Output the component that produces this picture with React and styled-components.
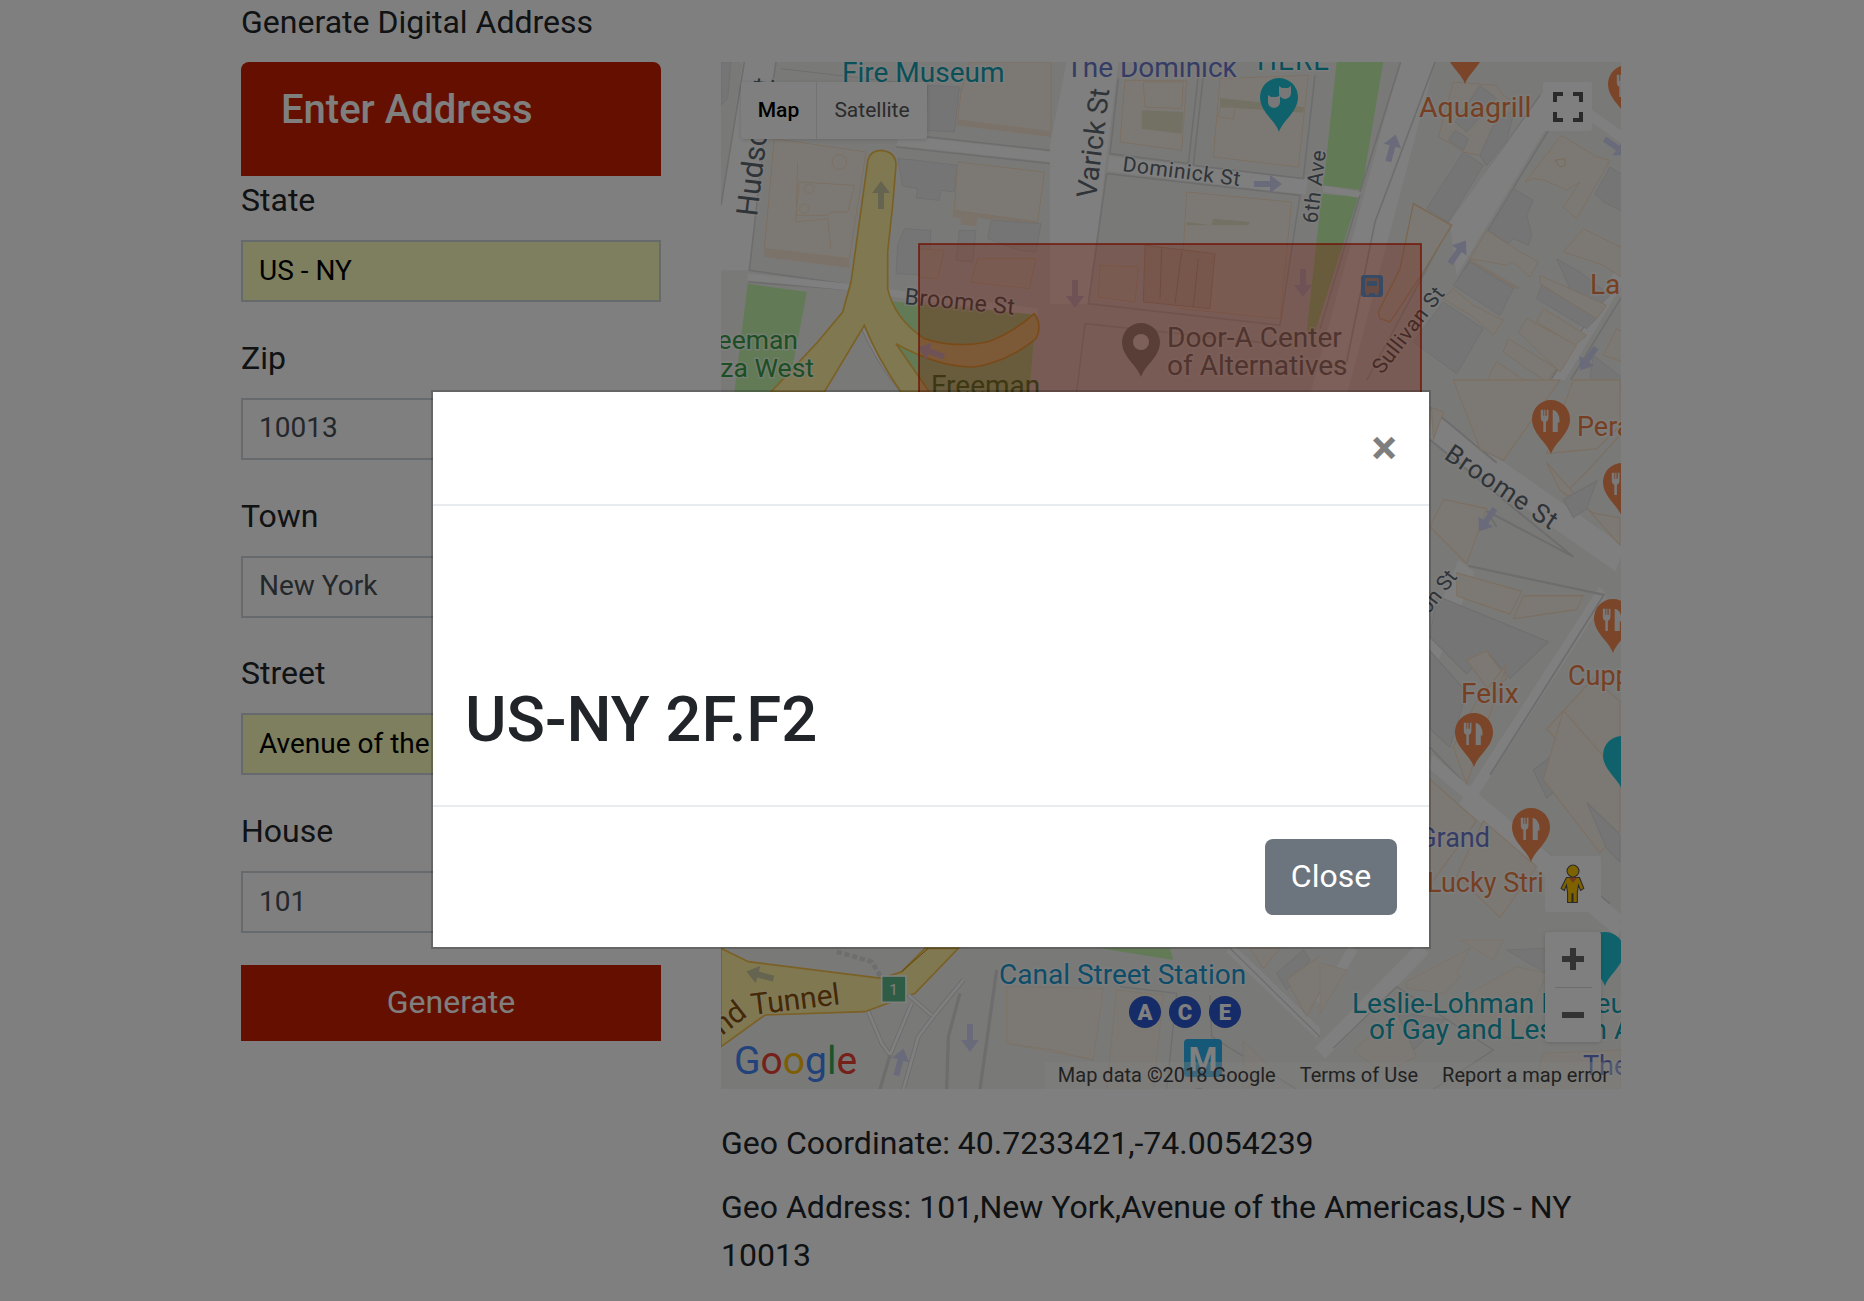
import React from 'react';
import styled, { createGlobalStyle } from 'styled-components';

const GlobalStyle = createGlobalStyle`
  html, body { margin: 0; padding: 0; height: 100%; overflow: hidden; background: #fff; }
  body { font-family: Roboto, "Liberation Sans", sans-serif; font-size: 32px; line-height: 1.5; color: #212529; }
  * { box-sizing: border-box; }
`;

const Page = styled.div`
  display: grid;
  grid-template-columns: 420px 900px;
  column-gap: 60px;
  padding-left: 241px;
  margin-top: -2px;
`;

const Title = styled.div`
  grid-column: 1 / 3;
  margin-bottom: 16px;
`;

const FormCol = styled.div`
  display: flex;
  flex-direction: column;
`;

const FormHeader = styled.div`
  height: 114px;
  padding: 24px 40px;
  background: #c81e00;
  color: #fff;
  border-radius: 8px 8px 0 0;
  font-size: 40px;
  font-weight: 500;
  line-height: 48px;
`;

const Group = styled.div`
  display: flex;
  flex-direction: column;
  margin-bottom: 31.75px;
`;

const FieldLabel = styled.label`
  margin-bottom: 16px;
`;

const Field = styled.input`
  height: 62px;
  width: 100%;
  padding: 0 16px 2px;
  border: 2px solid #ced4da;
  outline: none;
  font-family: inherit;
  font-size: 28px;
  color: ${({ $filled }) => ($filled ? '#000' : '#495057')};
  background: ${({ $filled }) => ($filled ? '#faffbd' : '#fff')};
`;

const Generate = styled.button`
  height: 76px;
  padding: 0 0 2px;
  border: 0;
  background: #c81e00;
  color: #fff;
  font-family: inherit;
  font-size: 32px;
`;

const MapCol = styled.div`
  display: flex;
  flex-direction: column;
`;

const MapBox = styled.div`
  position: relative;
  width: 900px;
  height: 1027px;
  overflow: hidden;
  background: #f3f3f1;
  margin-bottom: 30px;
`;

const MapSvg = styled.svg`
  display: block;
  width: 900px;
  height: 1027px;
`;

const GeoLine = styled.p`
  margin: 0 0 16px;
`;

const TypeControl = styled.div`
  position: absolute;
  left: 20px;
  top: 20px;
  display: flex;
  height: 57px;
  background: #fff;
  border-radius: 3px;
  box-shadow: 0 1px 4px rgba(0, 0, 0, 0.15);
  font-size: 21px;
`;

const TypeTab = styled.div`
  display: flex;
  align-items: center;
  justify-content: center;
  width: ${({ $w }) => $w}px;
  color: ${({ $active }) => ($active ? '#000' : '#565656')};
  font-weight: ${({ $active }) => ($active ? 500 : 400)};
  border-right: ${({ $active }) => ($active ? '1px solid #e6e6e6' : '0')};
`;

const MapButton = styled.div`
  position: absolute;
  display: flex;
  align-items: center;
  justify-content: center;
  left: ${({ $x }) => $x}px;
  top: ${({ $y }) => $y}px;
  width: ${({ $w }) => $w}px;
  height: ${({ $h }) => $h}px;
  background: #fff;
  border-radius: 3px;
`;

const ZoomBox = styled.div`
  position: absolute;
  left: 824px;
  top: 870px;
  width: 56px;
  height: 110px;
  background: #fff;
  border-radius: 3px;
  box-shadow: 0 1px 4px rgba(0, 0, 0, 0.15);
  display: flex;
  flex-direction: column;
  align-items: center;
`;

const ZoomPart = styled.div`
  flex: 1;
  display: flex;
  align-items: center;
  justify-content: center;
`;

const ZoomRule = styled.div`
  width: 37px;
  height: 1px;
  background: #d8d8d8;
`;

const Attribution = styled.div`
  position: absolute;
  right: 0;
  bottom: 0;
  height: 27px;
  width: 576px;
  display: flex;
  align-items: center;
  justify-content: flex-end;
  gap: 24px;
  padding-right: 12px;
  background: rgba(255, 255, 255, 0.4);
  color: #444;
  font-size: 20px;
  line-height: 27px;
  white-space: nowrap;
`;

const Backdrop = styled.div`
  position: fixed;
  inset: 0;
  background: rgba(0, 0, 0, 0.5);
  display: flex;
  justify-content: center;
  align-items: flex-start;
  padding: 390px 2px 0 0;
`;

const Modal = styled.div`
  width: 1000px;
  height: 559px;
  background: #fff;
  background-clip: padding-box;
  border: 2px solid rgba(0, 0, 0, 0.2);
  display: flex;
  flex-direction: column;
`;

const ModalHeader = styled.div`
  display: flex;
  justify-content: flex-end;
  height: 114px;
  padding: 32px;
  border-bottom: 2px solid #e9ecef;
`;

const CloseX = styled.span`
  font-size: 48px;
  font-weight: 700;
  line-height: 48px;
  color: #000;
  opacity: 0.5;
`;

const ModalBody = styled.div`
  flex: 1;
  display: flex;
  align-items: flex-end;
  padding: 32px;
`;

const Code = styled.h2`
  margin: 0 0 15px;
  font-size: 63.5px;
  font-weight: 500;
  line-height: 1.2;
`;

const ModalFooter = styled.div`
  display: flex;
  justify-content: flex-end;
  padding: 32px;
  border-top: 2px solid #e9ecef;
`;

const CloseButton = styled.button`
  width: 132px;
  height: 76px;
  padding: 0 0 2px;
  border: 0;
  border-radius: 8px;
  background: #6c757d;
  color: #fff;
  font-family: inherit;
  font-size: 32px;
`;

// map drawing parts
const Label = styled.text`
  font-family: Roboto, "Liberation Sans", sans-serif;
  font-size: ${({ $s }) => $s || 28}px;
  fill: ${({ $c }) => $c};
  stroke: ${({ $halo }) => $halo || 'rgba(255,255,255,.6)'};
  stroke-width: 3px;
  paint-order: stroke;
`;

const Beige = styled.polygon`
  fill: #f8f3ea;
  stroke: #f8dfc4;
  stroke-width: ${({ $sw }) => $sw || 3}px;
`;

const Shade = styled.polygon`
  fill: #f7e4d2;
`;

const Gray = styled.polygon`
  fill: #ebebeb;
  stroke: #dfdfdf;
  stroke-width: 3px;
`;

const RoadEdge = styled.polyline`
  fill: none;
  stroke: #dbdbdb;
  stroke-width: ${({ $sw }) => $sw || 5}px;
`;

const RoadFill = styled.polyline`
  fill: none;
  stroke: #fff;
  stroke-width: ${({ $sw }) => $sw || 20}px;
`;

const TEAL = '#12a0b2';
const INDIGO = '#6a78cc';
const ORANGE = '#ee7f45';
const PIN_ORANGE = '#f58a50';
const PIN_TEAL = '#1fc4d8';
const ROADTEXT = '#5f6870';
const ARROW = '#d4d7f5';

const PIN_PATH = 'M0 34 C-4 22 -19 14 -19 -1 A19 19 0 1 1 19 -1 C19 14 4 22 0 34Z';

const Pin = ({ x, y, color = PIN_ORANGE, children }) => (
  <g transform={`translate(${x} ${y})`}>
    <path d={PIN_PATH} fill={color} />
    {children}
  </g>
);

const Fork = () => (
  <g fill="#f3f3f3" transform="scale(.85)">
    <path d="M-12 -12v9q0 4 3 5v12h3V2q3-1 3-5v-9h-2v7h-1.5v-7h-1.5v7H-9v-7z" />
    <path d="M2 -12q8 2 8 13v2H8v11H2z" />
  </g>
);

const Mask = ({ x, y }) => (
  <path
    transform={`translate(${x} ${y})`}
    d="M-6 -6 L-3 -4 H3 L6 -6 V1 Q6 6 0 7 Q-6 6 -6 1Z"
    fill="#f0f0f0"
  />
);

const Arrow = ({ x, y, r = 0, color = ARROW }) => (
  <path
    transform={`translate(${x} ${y}) rotate(${r})`}
    d="M-3 14 L-3 -2 L-9 -2 L0 -14 L9 -2 L3 -2 L3 14 Z"
    fill={color}
  />
);

const Subway = ({ x, letter }) => (
  <g>
    <circle cx={x} cy="950" r="16" fill="#2a58d0" />
    <text x={x} y="958" textAnchor="middle" fontFamily="Roboto, sans-serif" fontWeight="900" fontSize="22" fill="#fff">
      {letter}
    </text>
  </g>
);

const MapDrawing = () => (
  <MapSvg viewBox="0 0 900 1027">
    <rect width="900" height="1027" fill="#f3f3f1" />

    {/* top left */}
    <g transform="scale(.33333)">
      <polygon points="65,0 165,0 85,625 0,625 0,430" fill="#fff" />
      <RoadEdge points="70,0 0,430" />
      <RoadEdge points="165,0 130,230 85,625 388,668" />
      <RoadEdge points="80,660 380,682" />
      <RoadFill $sw={20} points="80,645 385,675" />
      <RoadEdge points="525,255 990,305" />
      <RoadEdge points="180,20 990,115" $sw={3} />
      <RoadFill $sw={30} points="530,235 990,285" />
      <RoadEdge points="530,215 990,265" />
      <Gray points="0,0 30,0 20,110 0,130" />
      <Gray points="620,70 715,75 700,210 615,205" />
      <Beige points="745,0 990,0 990,210 710,175 720,90" />
      <Shade points="708,172 990,208 990,225 706,190" />
      <Beige points="160,230 435,270 385,590 130,560" />
      <Shade points="130,560 385,590 385,618 130,585" />
      <polyline points="230,300 225,480 320,470 330,560" fill="none" stroke="#f8dfc4" strokeWidth="3" />
      <polygon points="235,360 400,370 380,450 330,450 320,460 225,460" fill="none" stroke="#f8dfc4" strokeWidth="3" />
      <circle cx="355" cy="300" r="22" fill="none" stroke="#f8dfc4" strokeWidth="3" />
      <circle cx="265" cy="380" r="14" fill="none" stroke="#f8dfc4" strokeWidth="3" />
      <circle cx="250" cy="440" r="14" fill="none" stroke="#f8dfc4" strokeWidth="3" />
      <Gray points="530,290 590,295 670,305 710,310 700,390 660,385 655,415 585,408 590,380 545,372" />
      <Beige points="710,300 970,330 950,480 700,445" />
      <Shade points="695,445 950,482 950,490 770,468 765,492 720,488 718,468 695,465" />
      <Gray points="550,500 630,505 620,640 525,635 530,550" />
      <Gray points="715,505 765,505 755,600 705,595" />
      <Gray points="810,475 960,485 945,570 895,565 800,530" />
      <Beige points="595,560 670,565 650,650 595,645" />
      <Beige points="770,590 945,590 925,680 750,660" />
      <RoadFill $sw={20} points="470,688 590,703 950,750" />
      <polygon points="80,665 258,690 200,990 40,990" fill="#c6f5ae" />
      <polygon points="510,718 945,758 925,990 630,990 520,850" fill="#c6f5ae" />
      <path d="M425 795 Q470 900 545 990" fill="none" stroke="#dcdcdc" strokeWidth="14" />
      <path d="M425 795 Q470 900 545 990" fill="none" stroke="#fff" strokeWidth="8" />
      <path
        d="M440 300 Q445 265 482 265 Q525 270 525 310 L515 430 L500 570 L500 680 Q520 770 610 830 Q700 860 800 840 Q880 810 940 755 Q965 790 945 830 Q860 900 760 915 Q650 915 525 845 L625 990 L540 990 Q470 890 430 790 L310 990 L150 990 L290 840 L365 750 L390 660 Z"
        fill="#fff0a0"
        stroke="#f5c04a"
        strokeWidth="5"
      />
    </g>

    {/* top middle */}
    <g transform="translate(329 0) scale(.33333)">
      <polygon points="50,0 205,0 115,725 0,725 0,250" fill="#fff" />
      <RoadFill $sw={45} points="175,305 770,375" />
      <RoadEdge points="205,50 180,275 415,305 445,40" />
      <RoadEdge points="430,310 460,40" />
      <RoadEdge points="430,310 760,350 795,40" />
      <RoadEdge points="170,335 750,400 690,790 115,725 170,335" />
      <RoadEdge points="105,785 715,850" />
      <RoadEdge points="105,785 80,990" />
      <Beige points="225,55 410,55 395,265 210,240" />
      <polygon points="275,145 400,150 395,215 275,200" fill="#e6e0c8" />
      <polygon points="280,60 400,60 395,140 285,135" fill="none" stroke="#f8dfc4" strokeWidth="3" />
      <Beige points="510,50 775,40 745,315 490,285" />
      <polygon points="510,108 762,135 760,152 510,135" fill="#e6e0c8" />
      <polygon points="510,135 555,135 550,170 505,165" fill="none" stroke="#f8dfc4" strokeWidth="3" />
      <Beige points="410,390 725,420 690,770 390,740 " />
      <polygon points="410,480 485,490 490,470 600,480 595,490 410,490" fill="#e6e0c8" />
      <Beige points="150,610 265,615 255,720 145,705" />
      <polygon points="285,550 495,575 480,740 280,720" fill="#eee4d8" stroke="#e4cdb8" strokeWidth="3" />
      <polyline points="335,560 330,710" fill="none" stroke="#d8c4b4" strokeWidth="3" />
      <polyline points="395,570 375,725" fill="none" stroke="#d8c4b4" strokeWidth="3" />
      <polyline points="445,590 430,735" fill="none" stroke="#d8c4b4" strokeWidth="3" />
      <polygon points="860,0 1000,0 935,385 820,370" fill="#c6f5ae" />
      <polygon points="815,395 925,405 795,810 770,810" fill="#c6f5ae" />
      <polyline points="820,380 930,398" fill="none" stroke="#fff" strokeWidth="18" />
    </g>

    {/* top right */}
    <g transform="translate(619 0) scale(.33333)">
      <polygon points="180,0 285,0 20,1000 -90,1000" fill="#fff" />
      <RoadEdge points="285,0 105,480 20,900" />
      <RoadEdge points="182,0 60,390" />
      <RoadEdge points="60,400 -60,800" />
      <RoadEdge points="80,955 330,490 600,100" />
      <RoadEdge points="350,660 640,180" />
      <polygon points="330,480 610,90 660,130 350,640" fill="#fff" />
      <polyline points="640,80 850,230" fill="none" stroke="#fff" strokeWidth="30" />
      <polyline points="630,990 840,640" fill="none" stroke="#fff" strokeWidth="40" />
      <RoadEdge points="610,990 820,650" />
      <RoadEdge points="670,990 860,680" />
      <polygon points="220,425 335,490 250,630 150,780 120,770 115,750 180,620" fill="#f8f3ea" stroke="#f5cfa4" strokeWidth="4" />
      <Gray points="370,270 430,310 325,480 260,440" />
      <Beige points="340,60 470,70 490,100 520,120 450,250 440,310 420,280 370,270 325,240 295,225" />
      <Gray points="420,70 470,110 380,210 345,180" />
      <Gray points="460,190 525,140 500,235 440,310 420,280" />
      <Gray points="345,205 385,230 370,265 325,235" />
      <Beige points="665,220 770,285 810,295 750,400 710,470 670,435 720,360 680,385 615,355 580,350 555,360" />
      <polygon points="645,295 675,290 675,310 660,315" fill="none" stroke="#f0d4b0" strokeWidth="3" />
      <Gray points="810,315 850,340 850,450 790,420 765,395" />
      <Gray points="520,380 580,415 560,460 575,520 565,550 520,530 505,545 445,505" />
      <Beige points="440,505 525,560 595,600 570,645 520,600 500,610 390,590" />
      <Shade points="390,590 545,680 520,680 390,605" />
      <Gray points="390,600 520,680 480,760 340,670" />
      <Beige points="340,680 400,730 490,775 460,820 400,765 310,710" />
      <Gray points="310,720 430,800 350,935 220,840" />
      <Beige points="730,500 850,560 850,650 790,610 670,570" />
      <Gray points="650,590 720,630 810,700 780,730 690,680" />
      <Gray points="605,670 770,770 740,800 590,710" />
      <Beige points="600,640 800,730 770,770 600,665" />
      <Beige points="610,740 740,820 705,850 590,780" />
      <Beige points="560,770 710,850 660,930 535,810" />
      <Beige points="505,830 650,920 620,960 490,870" />
      <Beige points="470,900 610,990 440,990 450,935" />
      <Gray points="760,880 850,950 850,990 745,980" />
      <Beige points="830,800 850,810 850,900 790,880" />
    </g>

    {/* right strip */}
    <g transform="translate(679 318) scale(.33333 .45914)">
      <polygon points="90,0 660,0 660,1100 90,1100" fill="#f3f3f1" />
      <polyline points="90,100 660,390" fill="none" stroke="#fff" strokeWidth="60" />
      <RoadEdge points="90,60 290,180" />
      <RoadEdge points="90,130 520,385 260,285 290,320" />
      <polyline points="200,405 90,600" fill="none" stroke="#fff" strokeWidth="55" />
      <polyline points="610,460 200,920 660,1200" fill="none" stroke="#fff" strokeWidth="30" />
      <RoadEdge points="205,405 612,468 270,860" />
      <RoadEdge points="90,800 230,905 630,1140" $sw={4} />
      <polyline points="90,830 660,1180" fill="none" stroke="#fff" strokeWidth="30" />
      <Beige points="160,0 480,0 310,175 240,150" />
      <Beige points="95,60 130,70 100,130" />
      <Beige points="520,0 660,0 660,100 590,150 440,160" />
      <polyline points="490,250 560,200 660,120" fill="none" stroke="#f8dfc4" strokeWidth="3" />
      <Beige points="130,260 260,280 200,400 90,320" />
      <Beige points="480,240 580,290 660,300 660,360 440,180" />
      <Gray points="490,260 590,220 560,280 520,300" />
      <Beige points="170,420 365,460 330,510 170,470" />
      <Beige points="370,470 550,470 530,500 340,520" />
      <Gray points="110,470 445,570 330,650 260,590 200,640 90,560" />
      <Gray points="90,590 200,680 150,800 90,760" />
      <Beige points="200,610 260,590 320,650 270,680" />
      <Beige points="160,800 230,700 320,620 200,880" />
      <Gray points="400,850 470,810 520,860 440,910" />
      <Beige points="440,760 580,650 660,700 660,830 590,880" />
      <Beige points="490,720 660,860 660,980 600,1030 430,870" />
      <Gray points="560,920 660,990 660,1050 620,1020" />
      <Beige points="90,870 230,960 90,1100" />
      <Beige points="250,960 410,1060 300,1170 170,1080" />
    </g>

    {/* bottom */}
    <g transform="translate(-6 878) scale(.33333)">
      <polygon points="0,25 900,25 900,448 0,448" fill="#f3f3f1" />
      <polygon points="18,25 100,65 500,115 560,95 630,25 730,25 600,160 450,215 150,225 18,320" fill="#fff0a0" stroke="#f5c04a" strokeWidth="5" />
      <polyline points="640,25 560,95" fill="none" stroke="#c88a10" strokeWidth="3" />
      <polyline points="365,35 470,65 500,115" fill="none" stroke="#dcdcdc" strokeWidth="14" strokeDasharray="16 8" />
      <RoadEdge $sw={14} points="460,215 500,310 525,345 590,190" />
      <RoadFill $sw={8} points="460,215 500,310 525,345 590,190" />
      <RoadEdge $sw={14} points="580,165 655,230 745,120" />
      <RoadFill $sw={8} points="580,165 655,230 745,120" />
      <RoadEdge $sw={14} points="655,230 610,290 565,448" />
      <RoadFill $sw={8} points="655,230 610,290 565,448" />
      <RoadEdge $sw={10} points="525,345 495,448" />
      <RoadEdge $sw={10} points="735,160 700,290 695,448" />
      <RoadEdge $sw={10} points="845,90 795,448" />
      <rect x="500" y="108" width="73" height="79" fill="#5fb98a" stroke="#fff" strokeWidth="5" />
      <text x="536" y="165" textAnchor="middle" fontFamily="Roboto, sans-serif" fontSize="46" fill="#fff">1</text>
    </g>
    <g transform="translate(289 878) scale(.33333)">
      <polygon points="0,25 700,25 700,448 0,448" fill="#f3f3f1" />
      <polygon points="270,25 480,25 490,60" fill="#c6f5ae" />
      <Beige points="-10,140 280,145 250,360 -10,310" $sw={2} />
      <Beige points="320,150 460,165 430,448 290,448" $sw={2} />
      <polyline points="-10,310 130,330 250,360" fill="none" stroke="#f8dfc4" strokeWidth="2" />
      <polyline points="660,25 930,285" fill="none" stroke="#fff" strokeWidth="30" />
      <RoadEdge points="660,25 930,290 1000,200" $sw={4} />
      <RoadEdge points="330,140 500,160 470,448" $sw={4} />
      <RoadEdge points="600,165 605,290 860,448" $sw={4} />
      <Beige points="700,305 800,400 700,448" $sw={2} />
      <Gray points="800,100 880,30 900,60 830,150" />
      <Beige points="720,25 810,25 760,85" />
      <Beige points="830,120 940,40 960,100 890,230" />
      <ellipse cx="568" cy="470" rx="30" ry="26" fill="#c8c8c8" />
    </g>
    <g transform="translate(599 878) scale(.33333)">
      <polygon points="0,25 903,25 903,448 0,448" fill="#f3f3f1" />
      <polyline points="100,25 0,190" fill="none" stroke="#fff" strokeWidth="30" />
      <polyline points="310,25 0,340" fill="none" stroke="#fff" strokeWidth="45" />
      <RoadEdge points="40,325 230,140 520,330 340,448" $sw={4} />
      <Beige points="0,70 80,90 0,220" $sw={2} />
      <Beige points="260,125 450,25 410,100 420,110 375,160 260,145" $sw={2} />
      <Gray points="230,215 375,240 280,330" />
      <Beige points="100,330 230,220 290,350 190,400" $sw={2} />
      <Beige points="380,200 590,80 680,100 600,300 440,270" $sw={2} />
      <Gray points="560,30 680,25 680,100" />
      <Beige points="420,0 550,0 520,60" $sw={2} />
      <polygon points="670,340 903,330 903,448 640,448" fill="#f8f3ea" stroke="#f8dfc4" strokeWidth="2" />
    </g>

    {/* arrows */}
    <Arrow x={160} y={133} color="#c8c8a0" />
    <Arrow x={547} y={122} r={90} />
    <Arrow x={671} y={86} r={15} />
    <Arrow x={737} y={190} r={35} />
    <Arrow x={867} y={297} r={215} />
    <Arrow x={895} y={85} r={125} />
    <Arrow x={766} y={458} r={215} />
    <Arrow x={39} y={913} r={-75} color="#c8c8a0" />
    <Arrow x={179} y={1000} r={15} />
    <Arrow x={249} y={976} r={180} />
    <Arrow x={354} y={232} r={180} />
    <Arrow x={582} y={221} r={180} />
    <Arrow x={210} y={290} r={-70} />

    {/* labels that sit under the red area */}
    <Label $s={23} $c={ROADTEXT} transform="translate(183 242) rotate(5.5)" letterSpacing=".4">Broome St</Label>
    <Label $c="#4a8c3a" x="210" y="333" $halo="none">Freeman</Label>
    <Pin x={420} y={281} color="#9a9ea2">
      <circle cy="-1" r="8" fill="#fff" />
    </Pin>
    <Label $c="#7c8288" x="446" y="285">Door-A Center</Label>
    <Label $c="#7c8288" x="446" y="313">of Alternatives</Label>
    <Label $s={21} $c={ROADTEXT} transform="translate(661 313) rotate(-52)" letterSpacing=".6">Sullivan St</Label>

    {/* the plotted bounding box */}
    <rect x="198" y="182" width="502" height="170" fill="#f03000" fillOpacity=".3" stroke="#e02000" strokeOpacity=".7" strokeWidth="2" />

    <g transform="translate(640 213)">
      <rect width="22" height="22" rx="3" fill="#6f97c8" />
      <rect x="4" y="3" width="14" height="15" rx="2" fill="#d09888" />
      <rect x="6" y="6" width="10" height="5" fill="#6f97c8" />
      <rect x="5" y="18" width="3" height="2" fill="#d09888" />
      <rect x="14" y="18" width="3" height="2" fill="#d09888" />
    </g>

    {/* labels */}
    <Label $c={TEAL} x="121" y="20">Fire Museum</Label>
    <Label $c={INDIGO} x="345" y="15">The Dominick</Label>
    <Label $c={TEAL} x="536" y="8" letterSpacing="1">HERE</Label>
    <Label $c={ROADTEXT} $s={28} transform="translate(375 137) rotate(-83)">Varick St</Label>
    <Label $c={ROADTEXT} $s={30} transform="translate(36 155) rotate(-83)">Hudson St</Label>
    <Label $s={21} $c={ROADTEXT} transform="translate(401 109) rotate(7.3)" letterSpacing=".6">Dominick St</Label>
    <Label $s={21} $c={ROADTEXT} transform="translate(596 162) rotate(-83)" letterSpacing=".6">6th Ave</Label>
    <Label $c="#3a9c48" $s={26.5} x="77" y="287" textAnchor="end">Freeman</Label>
    <Label $c="#3a9c48" $s={26.5} x="93" y="315" textAnchor="end">Plaza West</Label>
    <Label $c={ORANGE} $s={28.5} x="698" y="55">Aquagrill</Label>
    <Label $c={ORANGE} $s={28} x="869" y="232">La</Label>
    <Label $c={ORANGE} $s={27} x="856" y="374">Pera</Label>
    <Label $c={ROADTEXT} $s={26} transform="translate(722 396) rotate(34)" letterSpacing="1">Broome St</Label>
    <Label $s={21} $c={ROADTEXT} transform="translate(737 515) rotate(-52)" textAnchor="end">Thompson St</Label>
    <Label $c={ORANGE} $s={27} x="847" y="623">Cuppa</Label>
    <Label $c={ORANGE} $s={28} x="740" y="641">Felix</Label>
    <Label $c={INDIGO} $s={27} x="769" y="785" textAnchor="end">Grand</Label>
    <Label $c={ORANGE} $s={27} x="706" y="830">Lucky Strike</Label>
    <Label $c={TEAL} x="631" y="951">Leslie-Lohman Museum</Label>
    <Label $c={TEAL} x="648" y="977">of Gay and Lesbian Art</Label>
    <Label $c={INDIGO} $s={27} x="862" y="1013">The</Label>
    <Label $c="#1a9ad4" x="278" y="922">Canal Street Station</Label>
    <Label $c="#8a5208" $s={30} $halo="rgba(255,245,190,.8)" transform="translate(31 953) rotate(-7)">Tunnel</Label>
    <Label $c="#8a5208" $s={30} $halo="rgba(255,245,190,.8)" transform="translate(1 974) rotate(-38)">nd</Label>

    {/* pins */}
    <Pin x={558} y={36} color={PIN_TEAL}>
      <Mask x={-5} y={3} />
      <Mask x={6} y={-6} />
    </Pin>
    <Pin x={744} y={-12}><Fork /></Pin>
    <Pin x={906} y={23}><Fork /></Pin>
    <Pin x={830} y={358}><Fork /></Pin>
    <Pin x={901} y={421}><Fork /></Pin>
    <Pin x={892} y={557}><Fork /></Pin>
    <Pin x={753} y={671}><Fork /></Pin>
    <Pin x={810} y={766}><Fork /></Pin>
    <Pin x={901} y={694} color={PIN_TEAL} />
    <Pin x={884} y={890} color={PIN_TEAL} />

    <Subway x={424} letter="A" />
    <Subway x={464} letter="C" />
    <Subway x={504} letter="E" />
    <rect x="463" y="977" width="38" height="38" rx="4" fill="#2ab0ee" />
    <text x="482" y="1009" textAnchor="middle" fontFamily="Roboto, sans-serif" fontWeight="700" fontSize="33" fill="#fff">M</text>

    <text x="13" y="1012" fontFamily="Roboto, sans-serif" fontSize="39" fontWeight="400">
      <tspan fill="#4285f4">G</tspan>
      <tspan fill="#ea4335">o</tspan>
      <tspan fill="#fbbc05">o</tspan>
      <tspan fill="#4285f4">g</tspan>
      <tspan fill="#34a853">l</tspan>
      <tspan fill="#ea4335">e</tspan>
    </text>
  </MapSvg>
);

const fields = [
  { label: 'Zip', value: '10013' },
  { label: 'Town', value: 'New York' },
  { label: 'Street', value: 'Avenue of the Americas', filled: true },
  { label: 'House', value: '101' },
];

export default function App() {
  return (
    <>
      <GlobalStyle />
      <Page>
        <Title>Generate Digital Address</Title>
        <FormCol>
          <FormHeader>Enter Address</FormHeader>
          <Group>
            <FieldLabel>State</FieldLabel>
            <Field $filled readOnly value="US - NY" />
          </Group>
          {fields.map((f) => (
            <Group key={f.label}>
              <FieldLabel>{f.label}</FieldLabel>
              <Field $filled={f.filled} readOnly value={f.value} />
            </Group>
          ))}
          <Generate>Generate</Generate>
        </FormCol>
        <MapCol>
          <MapBox>
            <MapDrawing />
            <TypeControl>
              <TypeTab $active $w={76}>Map</TypeTab>
              <TypeTab $w={110}>Satellite</TypeTab>
            </TypeControl>
            <MapButton $x={822} $y={20} $w={49} $h={49}>
              <svg width="30" height="30" viewBox="0 0 30 30" fill="none" stroke="#555" strokeWidth="4">
                <path d="M2 10V2h8M20 2h8v8M28 20v8h-8M10 28H2v-8" />
              </svg>
            </MapButton>
            <MapButton $x={824} $y={794} $w={56} $h={56}>
              <svg width="26" height="40" viewBox="0 0 24 36">
                <circle cx="12" cy="6" r="5.5" fill="#ffc400" stroke="#555" strokeWidth="1" />
                <path d="M6 12h12l4 10-3 2-2-5-1 7v9h-4v-8h-1v8H7v-9l-1-7-2 5-3-2z" fill="#ffc400" stroke="#555" strokeWidth="1" />
                <path d="M8 12h8l-4 5z" fill="#e8743b" />
              </svg>
            </MapButton>
            <ZoomBox>
              <ZoomPart>
                <svg width="22" height="22" viewBox="0 0 22 22"><path d="M8 0h6v8h8v6h-8v8H8v-8H0V8h8z" fill="#666" /></svg>
              </ZoomPart>
              <ZoomRule />
              <ZoomPart>
                <svg width="22" height="6" viewBox="0 0 22 6"><rect width="22" height="6" fill="#666" /></svg>
              </ZoomPart>
            </ZoomBox>
            <Attribution>
              <span>Map data ©2018 Google</span>
              <span>Terms of Use</span>
              <span>Report a map error</span>
            </Attribution>
          </MapBox>
          <GeoLine>Geo Coordinate: 40.7233421,-74.0054239</GeoLine>
          <GeoLine>Geo Address: 101,New York,Avenue of the Americas,US - NY 10013</GeoLine>
        </MapCol>
      </Page>
      <Backdrop>
        <Modal>
          <ModalHeader>
            <CloseX>×</CloseX>
          </ModalHeader>
          <ModalBody>
            <Code>US-NY 2F.F2</Code>
          </ModalBody>
          <ModalFooter>
            <CloseButton>Close</CloseButton>
          </ModalFooter>
        </Modal>
      </Backdrop>
    </>
  );
}
